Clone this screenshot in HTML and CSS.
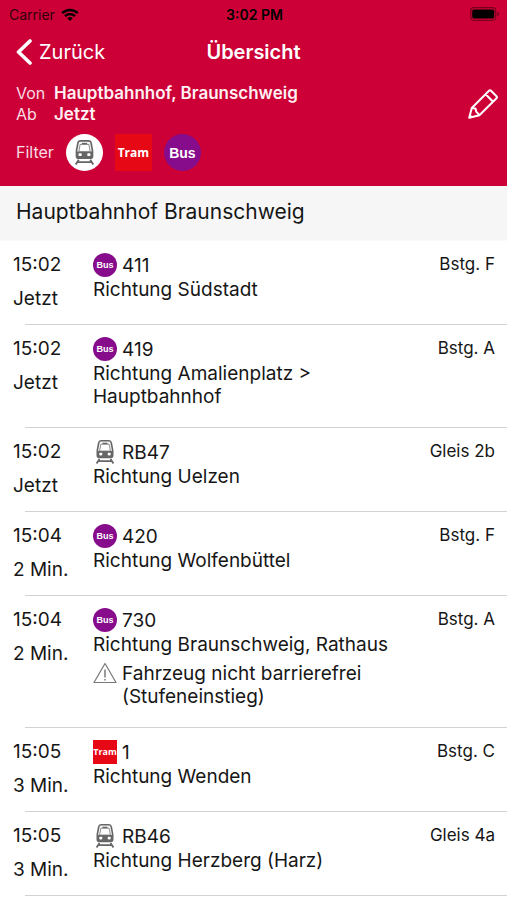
FILE: index.html
```html
<!DOCTYPE html>
<html lang="de">
<head>
<meta charset="utf-8">
<meta name="viewport" content="width=device-width, initial-scale=1">
<title>Übersicht</title>
<link rel="stylesheet" href="styles.css">
</head>
<body>
<svg class="symbols" aria-hidden="true">
  <symbol id="train" viewBox="0 0 24 24">
    <path d="M8 .8h8q1.900 0 2.300 2l1.400 7.700v5q0 1.900-1.900 1.900H6.200q-1.900 0-1.900-1.900v-5l1.400-7.700q.4-2 2.300-2z" fill="#f4f4f4" stroke="#666" stroke-width="1.600"/>
    <path d="M4.300 11h15.400v4.500q0 1.900-1.900 1.900H6.200q-1.900 0-1.900-1.900z" fill="#666"/>
    <path d="M7.800 4.300h8.400L17.400 11H6.600z" fill="#fff" stroke="#777" stroke-width=".8" stroke-linejoin="round"/>
    <path d="M9.500 3.400h5" stroke="#666" stroke-width="1.300"/>
    <rect x="6.300" y="12.800" width="3" height="2.600" rx=".8" fill="#fff"/>
    <rect x="14.700" y="12.800" width="3" height="2.600" rx=".8" fill="#fff"/>
    <path d="M6.500 19 3.600 23.500M17.500 19l2.900 4.500M5.500 21.200h13" fill="none" stroke="#666" stroke-width="1.800"/>
  </symbol>
</svg>
<header class="top">
  <div class="status">
    <div class="carrier">Carrier
      <svg width="18" height="13" viewBox="0 0 18 13" aria-hidden="true"><path d="M1.200 5.200a11 11 0 0 1 15.600 0M4 8.200a7 7 0 0 1 10 0" fill="none" stroke="#000" stroke-width="2.400"/><path d="M6.300 10.300a3.800 3.800 0 0 1 5.400 0L9 13z"/></svg>
    </div>
    <div class="clock">3:02 PM</div>
    <svg class="battery" width="30" height="14" viewBox="0 0 30 14" aria-hidden="true"><rect x=".7" y=".7" width="25" height="12.600" rx="3.500" fill="none" stroke="#7a0020" stroke-width="1.200"/><rect x="2.200" y="2.500" width="22" height="9" rx="2"/><path d="M27.200 4.800q2 .7 2 2.200t-2 2.200z" fill="#7a0020"/></svg>
  </div>
  <nav class="nav">
    <a class="back" href="#"><svg width="16" height="26" viewBox="0 0 16 26" aria-hidden="true"><path d="M14 2 2.500 13 14 24" fill="none" stroke="#fff" stroke-width="3.600" stroke-linecap="round" stroke-linejoin="round"/></svg>Zurück</a>
    <h1>Übersicht</h1>
  </nav>
  <div class="query">
    <dl>
      <dt>Von</dt><dd>Hauptbahnhof, Braunschweig</dd>
      <dt>Ab</dt><dd>Jetzt</dd>
    </dl>
    <button class="edit" type="button" aria-label="Bearbeiten"><svg width="30" height="30" viewBox="0 0 30 30" aria-hidden="true"><path d="M1.200 28.800 3.800 19 21 1.800q1-1 2 0l5.500 5.500q1 1 0 2L11.400 26.200zM17.600 5.200l7.500 7.500M3.800 19l3.700.6.700 3 3.200 3.600" fill="none" stroke="#fff" stroke-width="2" stroke-linejoin="round"/><path d="m1.200 28.800.9-3.700 2.800 2.800z" fill="#fff"/></svg></button>
  </div>
  <div class="filter">
    <span class="filter-label">Filter</span>
    <button class="chip rail" type="button" aria-label="Bahn"><svg width="25" height="25"><use href="#train"/></svg></button>
    <button class="chip tram" type="button">Tram</button>
    <button class="chip bus" type="button">Bus</button>
  </div>
</header>
<main>
  <h2>Hauptbahnhof Braunschweig</h2>
  <ul class="departures">
    <li>
      <div class="when"><time>15:02</time><span>Jetzt</span></div>
      <div class="trip"><div class="line"><span class="badge bus">Bus</span>411</div><p>Richtung Südstadt</p></div>
      <div class="place">Bstg. F</div>
    </li>
    <li>
      <div class="when"><time>15:02</time><span>Jetzt</span></div>
      <div class="trip"><div class="line"><span class="badge bus">Bus</span>419</div><p>Richtung Amalienplatz &gt; Hauptbahnhof</p></div>
      <div class="place">Bstg. A</div>
    </li>
    <li>
      <div class="when"><time>15:02</time><span>Jetzt</span></div>
      <div class="trip"><div class="line"><svg class="badge" aria-hidden="true"><use href="#train"/></svg>RB47</div><p>Richtung Uelzen</p></div>
      <div class="place">Gleis 2b</div>
    </li>
    <li>
      <div class="when"><time>15:04</time><span>2 Min.</span></div>
      <div class="trip"><div class="line"><span class="badge bus">Bus</span>420</div><p>Richtung Wolfenbüttel</p></div>
      <div class="place">Bstg. F</div>
    </li>
    <li>
      <div class="when"><time>15:04</time><span>2 Min.</span></div>
      <div class="trip"><div class="line"><span class="badge bus">Bus</span>730</div><p>Richtung Braunschweig, Rathaus</p>
        <div class="notice"><svg width="24" height="22" viewBox="0 0 24 22" aria-hidden="true"><path d="M12 1.500 23 20.500H1z" fill="none" stroke="#777" stroke-width="1.200" stroke-linejoin="round"/><path d="M12 7.500v8M12 17v1.500" stroke="#666" stroke-width="1.300"/></svg><p>Fahrzeug nicht barrierefrei (Stufeneinstieg)</p></div>
      </div>
      <div class="place">Bstg. A</div>
    </li>
    <li>
      <div class="when"><time>15:05</time><span>3 Min.</span></div>
      <div class="trip"><div class="line"><span class="badge tram">Tram</span>1</div><p>Richtung Wenden</p></div>
      <div class="place">Bstg. C</div>
    </li>
    <li>
      <div class="when"><time>15:05</time><span>3 Min.</span></div>
      <div class="trip"><div class="line"><svg class="badge" aria-hidden="true"><use href="#train"/></svg>RB46</div><p>Richtung Herzberg (Harz)</p></div>
      <div class="place">Gleis 4a</div>
    </li>
  </ul>
</main>
</body>
</html>
```
FILE: styles.css
```css
* { box-sizing: border-box; }
body { margin: 0; background: #fff; color: #161616; font-family: Inter, "Liberation Sans", sans-serif; font-size: 19px; line-height: 23px; }
h1, h2, p, dl, dd, ul { margin: 0; padding: 0; }
button { border: 0; padding: 0; background: none; color: #fff; font-family: inherit; }
.symbols { display: none; }

.top { background: #cc0036; color: #fff; padding-bottom: 15px; }
.status { display: grid; grid-template-columns: 1fr auto 1fr; align-items: center; height: 28px; padding: 0 7px 0 9px; color: #000; font-size: 14px; }
.carrier { display: flex; align-items: center; gap: 6px; color: #30000d; }
.clock { font-weight: 600; }
.battery { justify-self: end; }
.nav { display: grid; grid-template-columns: 1fr auto 1fr; align-items: center; height: 48px; padding: 0 16px; }
.back { display: flex; align-items: center; gap: 7px; color: #fff; font-size: 20px; text-decoration: none; }
h1 { font-size: 20px; font-weight: 600; }
.query { display: flex; justify-content: space-between; align-items: center; padding: 7px 9px 0 16px; }
dl { display: grid; grid-template-columns: 38px auto; font-size: 17px; line-height: 21px; }
dt { color: #f8dce3; font-size: 16px; }
dd { font-weight: 600; color: #fff0f3; }
.edit { display: flex; }
.filter { display: flex; align-items: center; gap: 12px; padding: 9px 16px 0; font-size: 16px; }
.filter-label { color: #f8dce3; }
.chip { display: flex; align-items: center; justify-content: center; width: 37px; height: 37px; font-size: 14px; font-weight: 700; }
.rail { border-radius: 50%; background: #fff; }
.bus { border-radius: 50%; background: #860c8c; font-family: "Liberation Sans", sans-serif; }
.tram { background: #e60814; font-family: "Open Sans", sans-serif; }
.chip.tram { font-size: 12px; }

h2 { padding: 14px 16px 16px; background: #f6f6f6; border-bottom: 1px solid #fafafa; font-size: 21px; line-height: 24px; font-weight: 400; }
.departures { list-style: none; }
.departures li { display: grid; grid-template-columns: 80px 1fr auto; padding: 12px 0 0 13px; }
.departures li::after { content: ""; grid-column: 1 / -1; height: 1px; margin-left: 12px; background: #d2d2d2; }
.when { display: flex; flex-direction: column; gap: 10px; padding-bottom: 13px; line-height: 24px; }
.trip { padding-bottom: 19px; }
.line { display: flex; align-items: center; gap: 5px; height: 24px; margin-bottom: 1px; }
.badge { display: flex; align-items: center; justify-content: center; width: 24px; height: 24px; color: #fff; font-size: 9px; font-weight: 700; line-height: 24px; }
.notice { display: flex; gap: 5px; margin-top: 6px; }
.notice svg { flex: none; }
.notice p { max-width: 256px; }
.place { margin-right: 12px; font-size: 17px; line-height: 22px; }
```
